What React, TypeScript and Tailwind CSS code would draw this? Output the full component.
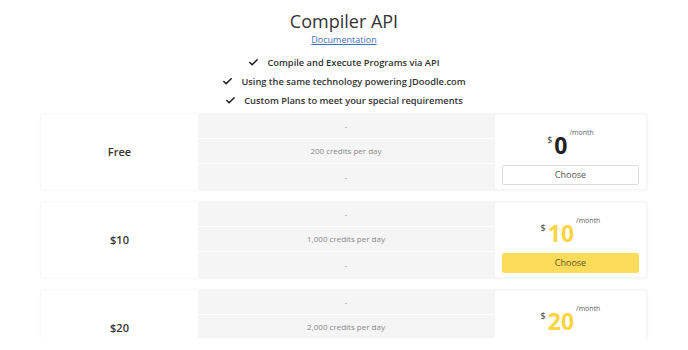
import { Check } from "lucide-react";

const features = [
  "Compile and Execute Programs via API",
  "Using the same technology powering JDoodle.com",
  "Custom Plans to meet your special requirements",
];

type Plan = {
  label: string;
  price: string;
  credits: string;
  highlight: boolean;
  // last card is cut off by the bottom of the page
  partial?: boolean;
};

const plans: Plan[] = [
  { label: "Free", price: "0", credits: "200 credits per day", highlight: false },
  { label: "$10", price: "10", credits: "1,000 credits per day", highlight: true },
  { label: "$20", price: "20", credits: "2,000 credits per day", highlight: true, partial: true },
];

function PlanCard({ plan }: { plan: Plan }) {
  return (
    <div className="flex h-[78px] shrink-0 border border-[#f8f8f8] shadow-[0_0_2px_rgba(0,0,0,0.03)]">
      <div className="w-[157px] flex items-center justify-center bg-white text-[11px] font-semibold text-[#333]">
        {plan.label}
      </div>
      <div className="w-[296px] flex flex-col bg-[#f5f5f5] text-[8px] text-[#888]">
        <div className="h-[25px] flex items-center justify-center border-b border-white">-</div>
        <div className="h-[25px] flex items-center justify-center border-b border-white">
          {plan.credits}
        </div>
        {!plan.partial && <div className="h-[25px] flex items-center justify-center">-</div>}
      </div>
      <div className="flex-1 flex flex-col pt-[12px] px-[7px] bg-white border border-[#f6f6f6]">
        <div className="h-[38px] flex items-start justify-center">
          <span className="text-[9px] leading-[10px] mt-[8px] mr-[2px] text-[#333]">$</span>
          <span
            className={
              plan.highlight
                ? "text-[23px] leading-[28px] mt-[4px] font-bold text-[#f9d443]"
                : "text-[23px] leading-[28px] mt-[4px] font-bold text-[#222]"
            }
          >
            {plan.price}
          </span>
          <span className="text-[7px] leading-[8px] mt-[2px] ml-[2px] text-[#666]">/month</span>
        </div>
        {!plan.partial && (
          <button
            className={
              plan.highlight
                ? "h-[20px] w-full rounded-[2px] bg-[#fddc5a] text-[9px] text-[#5c5530]"
                : "h-[20px] w-full rounded-[2px] bg-white border border-[#dcdcdc] text-[9px] text-[#555]"
            }
          >
            Choose
          </button>
        )}
      </div>
    </div>
  );
}

export default function App() {
  return (
    <div className="w-[688px] h-[350px] overflow-hidden bg-white font-['Open_Sans',sans-serif]">
      <div className="h-[338px] overflow-hidden">
        <div className="flex flex-col items-center pt-[9px]">
          <h1 className="text-[18px] leading-[24px] text-[#333]">Compiler API</h1>
          <a href="#" className="mt-[1px] text-[9px] leading-[12px] text-[#3f6fba] underline">
            Documentation
          </a>
          <ul className="mt-[7px] flex flex-col items-center">
            {features.map((f) => (
              <li key={f} className="h-[19px] flex items-center gap-[8px] text-[9.3px] font-semibold text-[#333]">
                <Check size={11} strokeWidth={3.5} className="text-[#222]" />
                {f}
              </li>
            ))}
          </ul>
        </div>
        <div className="mt-[3px] px-[40px] flex flex-col gap-[10px]">
          {plans.map((p) => (
            <PlanCard key={p.label} plan={p} />
          ))}
        </div>
      </div>
    </div>
  );
}
